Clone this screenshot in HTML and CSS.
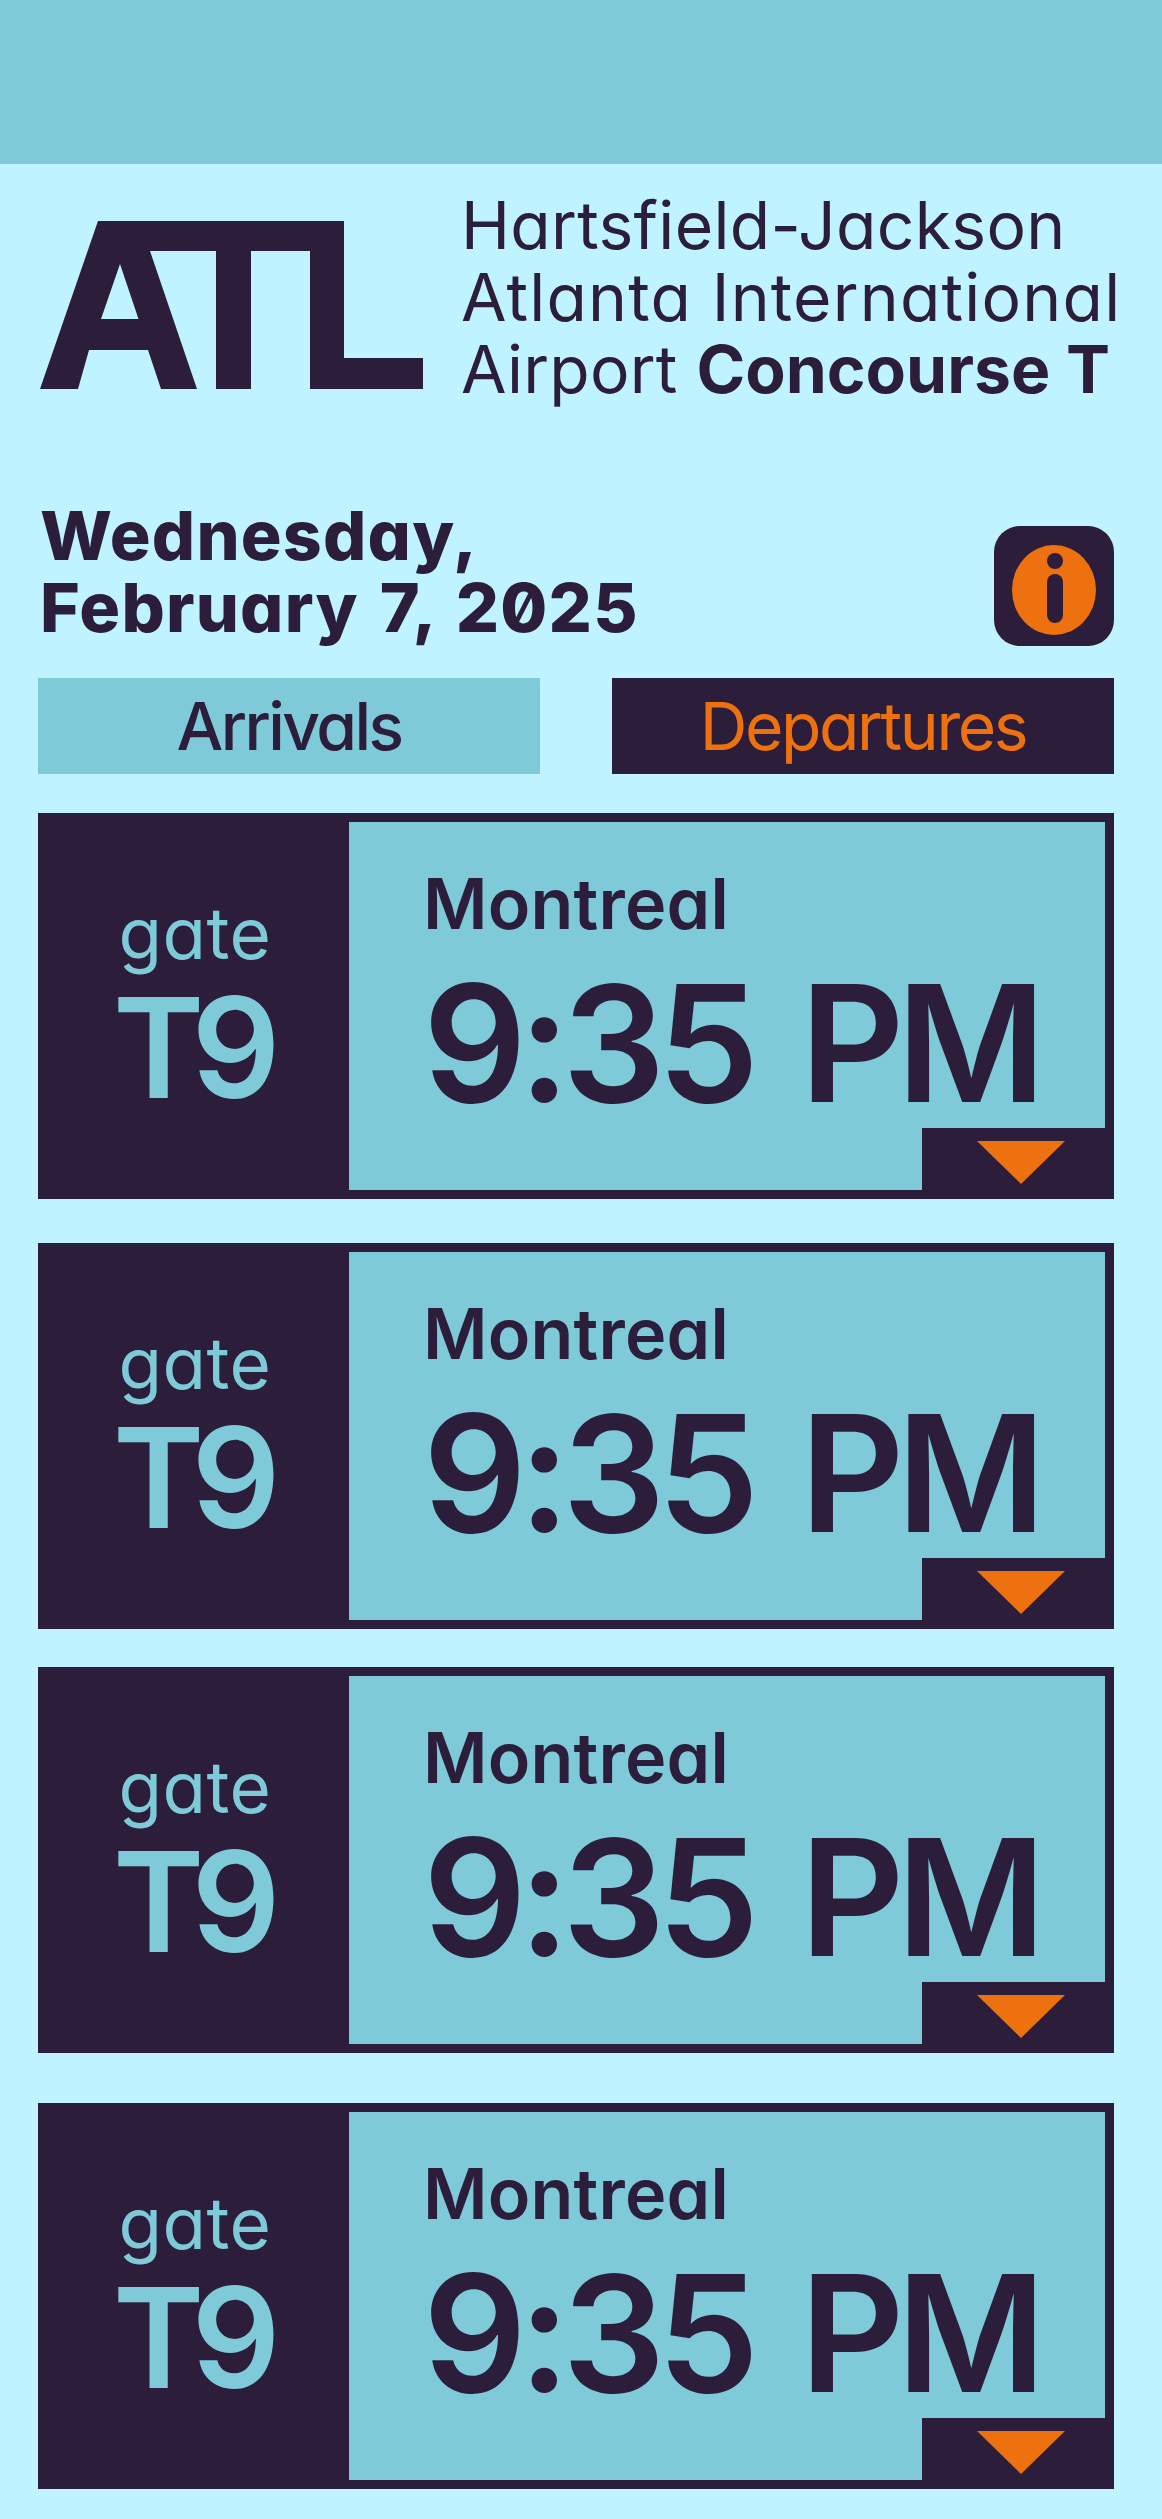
FILE: index.html
```html
<!DOCTYPE html>
<html lang="en">
<head>
    <meta charset="UTF-8">
    <title>ATL Concourse T</title>
    <link rel="stylesheet" href="styles.css">
</head>
<body>
<div class="topbar"></div>
<div class="header">
    <svg class="logo" viewBox="0 0 384 168" role="img" aria-label="ATL">
        <path fill-rule="evenodd" d="M58 0H304V137H383V168H270V30H211V168H176V30H110L157 168H121L108 129H49L38 168H0ZM80 43L61 98H98.500Z"/>
    </svg>
    <div class="airport">
        <div class="line1">Hartsfield-Jackson</div>
        <div class="line2">Atlanta International</div>
        <div class="line3">Airport <b>Concourse T</b></div>
    </div>
</div>
<div class="dateline">
    <div class="date">Wednesday,<br>February 7, 2025</div>
    <svg class="info" viewBox="0 0 120 120" role="img" aria-label="info">
        <rect width="120" height="120" rx="26" fill="#2c1e3a"/>
        <ellipse cx="60" cy="64" rx="42" ry="45" fill="#ed710e"/>
        <circle cx="61" cy="35" r="8" fill="#2c1e3a"/>
        <rect x="53" y="48" width="16" height="49" rx="8" fill="#2c1e3a"/>
    </svg>
</div>
<div class="tabs">
    <div class="tab">Arrivals</div>
    <div class="tab current">Departures</div>
</div>
<div class="card card1">
    <div class="gate"><span>gate</span><strong>T9</strong></div>
    <div class="flight"><div class="city">Montreal</div><div class="time">9:35 PM</div></div>
    <div class="more"><i></i></div>
</div>
<div class="card card2">
    <div class="gate"><span>gate</span><strong>T9</strong></div>
    <div class="flight"><div class="city">Montreal</div><div class="time">9:35 PM</div></div>
    <div class="more"><i></i></div>
</div>
<div class="card card3">
    <div class="gate"><span>gate</span><strong>T9</strong></div>
    <div class="flight"><div class="city">Montreal</div><div class="time">9:35 PM</div></div>
    <div class="more"><i></i></div>
</div>
<div class="card card4">
    <div class="gate"><span>gate</span><strong>T9</strong></div>
    <div class="flight"><div class="city">Montreal</div><div class="time">9:35 PM</div></div>
    <div class="more"><i></i></div>
</div>
</body>
</html>
```

FILE: styles.css
```css
* {
    padding: 0;
    margin: 0;
    box-sizing: border-box;
}

body {
    background: #bff3ff;
    color: #2c1e3a;
    font-family: "Inter", "Liberation Sans", sans-serif;
    font-feature-settings: "cv11", "zero";
}

.topbar {
    height: 164px;
    background: #7ecad8;
}

.header {
    display: flex;
    align-items: flex-start;
    height: 308px;
    padding: 25px 0 0 40px;
}

.logo {
    width: 384px;
    height: 168px;
    margin-top: 32px;
    fill: #2c1e3a;
}

.airport {
    margin-left: 37px;
    font-size: 66px;
    font-weight: 400;
    line-height: 72px;
    white-space: nowrap;
}

.line1 { letter-spacing: 0.3px; }
.line2 { letter-spacing: 1.2px; }
.line3 { letter-spacing: 0.2px; }

.airport b {
    font-weight: 700;
    letter-spacing: 0;
}

.dateline {
    display: flex;
    justify-content: space-between;
    align-items: flex-end;
    height: 174px;
    padding: 24px 48px 0 40px;
}

.date {
    margin-bottom: 3px;
    font-size: 68px;
    font-weight: 800;
    line-height: 72px;
    letter-spacing: 1.2px;
    word-spacing: 5px;
    white-space: nowrap;
}

.info {
    width: 120px;
    height: 120px;
}

.tabs {
    display: flex;
    justify-content: space-between;
    height: 96px;
    margin: 32px 48px 0 38px;
}

.tab {
    width: 502px;
    background: #7ecad8;
    font-size: 66px;
    font-weight: 500;
    line-height: 96px;
    letter-spacing: -2.6px;
    text-align: center;
}

.tab.current {
    background: #2c1e3a;
    color: #ed710e;
    font-weight: 400;
    letter-spacing: -2.4px;
}

.card {
    position: relative;
    display: flex;
    height: 386px;
    margin: 0 48px 0 38px;
    border: 9px solid #2c1e3a;
}

.card1 { margin-top: 39px; }
.card2 { margin-top: 44px; }
.card3 { margin-top: 38px; }
.card4 { margin-top: 50px; }

.gate {
    width: 302px;
    flex: none;
    padding-right: 6px;
    background: #2c1e3a;
    color: #7ecad8;
    text-align: center;
}

.gate span {
    display: block;
    margin-top: 66px;
    font-size: 71px;
    line-height: 90px;
    letter-spacing: 0.5px;
}

.gate strong {
    display: block;
    margin: 10px 0 0 -10px;
    font-size: 139px;
    font-weight: 600;
    line-height: 120px;
    letter-spacing: -13px;
}

.flight {
    flex: 1;
    background: #7ecad8;
    padding: 42px 0 0 74px;
}

.city {
    font-size: 70px;
    font-weight: 600;
    line-height: 80px;
    letter-spacing: 0.2px;
}

.time {
    margin-top: 14px;
    font-size: 162px;
    font-weight: 600;
    line-height: 170px;
    letter-spacing: -8px;
    word-spacing: 16px;
    white-space: nowrap;
}

.more {
    position: absolute;
    right: -9px;
    bottom: 0;
    width: 192px;
    height: 62px;
    background: #2c1e3a;
}

.more i {
    position: absolute;
    left: 55px;
    top: 13px;
    border-top: 43px solid #ed710e;
    border-left: 44px solid transparent;
    border-right: 44px solid transparent;
}
```
